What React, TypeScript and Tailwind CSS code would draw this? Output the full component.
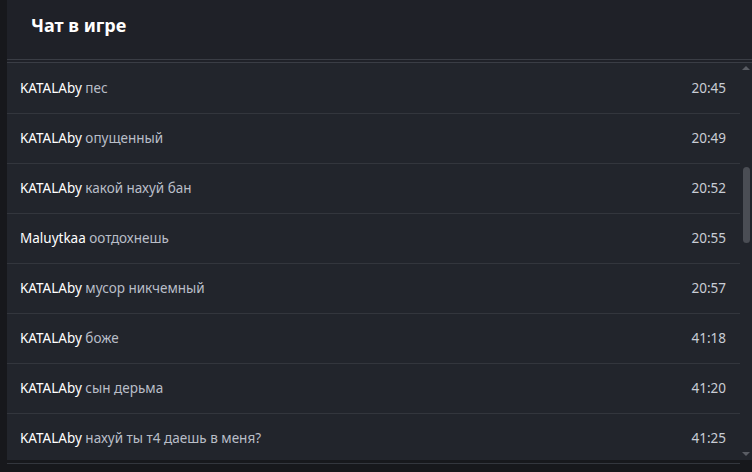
import React from "react";

type Msg = { name: string; text: string; time: string };

const messages: Msg[] = [
  { name: "KATALAby", text: "пес", time: "20:45" },
  { name: "KATALAby", text: "опущенный", time: "20:49" },
  { name: "KATALAby", text: "какой нахуй бан", time: "20:52" },
  { name: "Maluytkaa", text: "оотдохнешь", time: "20:55" },
  { name: "KATALAby", text: "мусор никчемный", time: "20:57" },
  { name: "KATALAby", text: "боже", time: "41:18" },
  { name: "KATALAby", text: "сын дерьма", time: "41:20" },
  { name: "KATALAby", text: "нахуй ты т4 даешь в меня?", time: "41:25" },
];

const App: React.FC = () => {
  return (
    <div
      className="h-[472px] w-[752px] overflow-hidden bg-[#17181c] pl-[7px]"
      style={{ fontFamily: '"Noto Sans", "Open Sans", sans-serif' }}
    >
      <div className="flex h-[460px] flex-col bg-[#22252c]">
        <div className="h-[59px] shrink-0 bg-[#1f2128] pl-[24px] pt-[12px]">
          <h1 className="text-[18px] font-bold leading-[27px] text-white">Чат в игре</h1>
        </div>
        <div className="h-px bg-[#3a3d45]" />
        <div className="h-[2px] bg-[#1f2128]" />
        <div className="flex min-h-0 flex-1 border-t border-[#3a3d45]">
          <ul className="min-w-0 flex-1 pt-px">
            {messages.map((m, i) => (
              <li
                key={i}
                className="flex h-[50px] items-center justify-between border-b border-[#33363d] pl-[13px] pr-[14px] text-[13.5px]"
              >
                <span>
                  <span className="text-white">{m.name}</span>{" "}
                  <span className="text-[#b9bec8]">{m.text}</span>
                </span>
                <span className="text-[#c9cdd5]">{m.time}</span>
              </li>
            ))}
          </ul>
          <div className="flex w-[12px] shrink-0 flex-col items-center">
            <div className="mt-[3px] h-0 w-0 border-x-[4px] border-b-[4px] border-x-transparent border-b-[#5a5d64]" />
            <div className="mt-[97px] h-[76px] w-[7px] rounded-full bg-[#4a4d54]" />
            <div className="flex-1" />
            <div className="mb-[4px] h-0 w-0 border-x-[4px] border-t-[4px] border-x-transparent border-t-[#5a5d64]" />
          </div>
        </div>
      </div>
    </div>
  );
};

export default App;
